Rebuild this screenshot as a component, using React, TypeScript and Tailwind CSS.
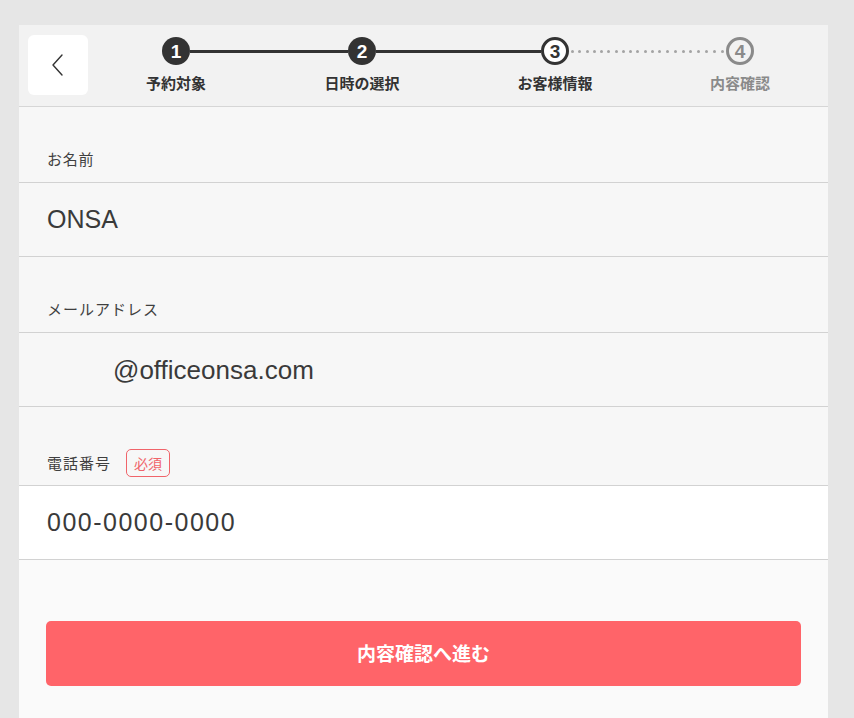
import React from "react";

const jp = { fontFamily: '"Noto Sans CJK JP", "Noto Sans", sans-serif' };
const lat = { fontFamily: '"Liberation Sans", Arial, sans-serif' };

type Kind = "none" | "solid" | "dotted";

type StepProps = {
  n: string;
  label: string;
  state: "done" | "current" | "todo";
  left: Kind;
  right: Kind;
  dots?: number;
};

function Seg({ kind, dots = 10 }: { kind: Kind; dots?: number }) {
  if (kind === "solid") return <div className="flex-1 h-[3px] bg-[#333333]" />;
  if (kind === "dotted")
    return (
      <div className="flex-1 flex items-center justify-around">
        {Array.from({ length: dots }).map((_, i) => (
          <span key={i} className="w-[3px] h-[3px] rounded-full bg-[#a3a3a3]" />
        ))}
      </div>
    );
  return <div className="flex-1" />;
}

function Step({ n, label, state, left, right, dots }: StepProps) {
  const circle =
    state === "done"
      ? "bg-[#333333] text-white"
      : state === "current"
      ? "bg-white border-[3px] border-[#333333] text-[#333333]"
      : "bg-[#f2f2f2] border-[3px] border-[#8a8a8a] text-[#8a8a8a]";
  return (
    <div className="flex flex-col items-center">
      <div className="flex items-center w-full">
        <Seg kind={left} dots={dots} />
        <div
          className={`w-[28px] h-[28px] rounded-full flex items-center justify-center text-[19px] font-bold leading-none ${circle}`}
          style={lat}
        >
          {n}
        </div>
        <Seg kind={right} dots={dots} />
      </div>
      <div
        className={`mt-[8px] text-[15px] font-bold leading-[19px] ${
          state === "todo" ? "text-[#8a8a8a]" : "text-[#333333]"
        }`}
        style={jp}
      >
        {label}
      </div>
    </div>
  );
}

function LabelRow({ children, h }: { children: React.ReactNode; h: string }) {
  return (
    <div className={`flex items-end px-[28px] border-b border-[#d2d2d2] ${h}`}>
      {children}
    </div>
  );
}

export default function App() {
  return (
    <div className="min-h-[718px] bg-[#e6e6e6] pt-[25px] pl-[19px]">
      <div className="w-[809px] min-h-[693px] flex flex-col bg-[#fafafa]">
        {/* Header */}
        <div className="h-[82px] bg-[#f2f2f2] border-b border-[#d6d6d6] flex items-start pl-[9px] pt-[10px]">
          <div className="w-[60px] h-[60px] bg-white rounded-[6px] flex items-center justify-center shrink-0">
            <svg width="14" height="24" viewBox="0 0 14 24" fill="none">
              <path d="M11 2 L2 12 L11 22" stroke="#333" strokeWidth="1.4" strokeLinecap="round" strokeLinejoin="round" />
            </svg>
          </div>
          <div className="grid grid-cols-[188px_184px_202px_168px] ml-[-6px] mt-[2px]">
            <Step n="1" label="予約対象" state="done" left="none" right="solid" />
            <Step n="2" label="日時の選択" state="done" left="solid" right="solid" />
            <Step n="3" label="お客様情報" state="current" left="solid" right="dotted" dots={12} />
            <Step n="4" label="内容確認" state="todo" left="dotted" right="none" dots={9} />
          </div>
        </div>

        {/* Form */}
        <div className="bg-[#f7f7f7]">
          <LabelRow h="h-[76px] pb-[13px]">
            <span className="text-[15px] text-[#3f3f3f] leading-[20px] tracking-[0.8px]" style={jp}>
              お名前
            </span>
          </LabelRow>
          <div className="h-[74px] flex items-center px-[28px] border-b border-[#d2d2d2]">
            <span className="text-[25px] text-[#3a3a3a] leading-none" style={lat}>
              ONSA
            </span>
          </div>
          <LabelRow h="h-[76px] pb-[13px]">
            <span className="text-[15px] text-[#3f3f3f] leading-[20px] tracking-[1px]" style={jp}>
              メールアドレス
            </span>
          </LabelRow>
          <div className="h-[74px] flex items-center pl-[94px] pr-[28px] border-b border-[#d2d2d2]">
            <span className="text-[26px] text-[#3a3a3a] leading-none" style={lat}>
              @officeonsa.com
            </span>
          </div>
          <LabelRow h="h-[79px] pb-[8px]">
            <div className="flex items-center">
              <span className="text-[15px] text-[#3f3f3f] leading-[20px] tracking-[1px]" style={jp}>
                電話番号
              </span>
              <span
                className="ml-[15px] h-[28px] px-[7px] flex items-center border border-[#f0646a] rounded-[5px] text-[14px] text-[#f0646a] leading-none"
                style={jp}
              >
                必須
              </span>
            </div>
          </LabelRow>
        </div>
        <div className="h-[74px] bg-white flex items-center px-[28px] border-b border-[#d2d2d2]">
          <span className="text-[25px] text-[#3a3a3a] leading-none tracking-[1.5px]" style={lat}>
            000-0000-0000
          </span>
        </div>

        {/* Button */}
        <div className="px-[27px] pt-[61px] pb-[32px] bg-[#fafafa]">
          <button
            className="w-full h-[65px] rounded-[5px] bg-[#ff6469] text-white text-[19px] font-bold flex items-center justify-center"
            style={jp}
          >
            内容確認へ進む
          </button>
        </div>
      </div>
    </div>
  );
}
